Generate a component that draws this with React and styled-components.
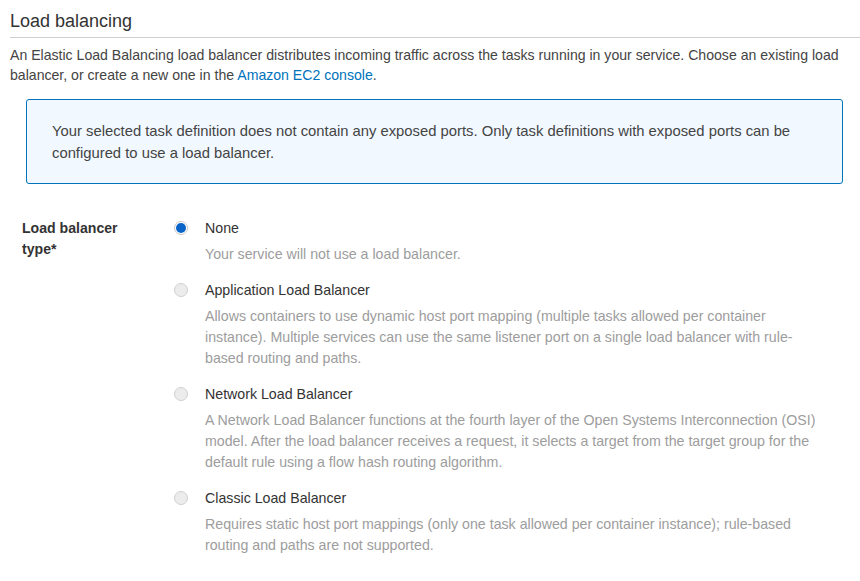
import React, { useState } from 'react'
import styled, { createGlobalStyle } from 'styled-components'

const GlobalStyle = createGlobalStyle`
  body {
    margin: 0;
    background: #ffffff;
    font-family: "Liberation Sans", Arial, sans-serif;
    color: #444;
  }
`

const Section = styled.section`
  padding: 10px 0 0 10px;
`

const Heading = styled.h2`
  margin: 0;
  font-size: 18px;
  font-weight: 400;
  line-height: 22px;
  color: #333;
  padding-bottom: 5px;
  border-bottom: 1px solid #cfcfcf;
`

const Intro = styled.p`
  margin: 7px 8px 0 0;
  font-size: 14.1px;
  line-height: 20px;
  color: #444;
`

const Link = styled.a`
  color: #0073bb;
  text-decoration: none;
`

const Alert = styled.div`
  margin: 14px 17px 0 16px;
  padding: 20px 25px 19px 25px;
  background: #f1f8ff;
  border: 1px solid #0073bb;
  border-radius: 3px;
  font-size: 14.8px;
  line-height: 22px;
  color: #444;
`

const Field = styled.div`
  display: grid;
  grid-template-columns: 152px 1fr;
  margin: 34px 40px 0 12px;
`

const Label = styled.div`
  font-size: 14.1px;
  font-weight: 700;
  line-height: 21px;
  color: #333;
`

const Options = styled.div`
  display: flex;
  flex-direction: column;
  gap: 15px;
`

const Option = styled.label`
  display: grid;
  grid-template-columns: 31px 1fr;
  cursor: pointer;
`

const Radio = styled.span`
  width: 14px;
  height: 14px;
  margin-top: 3px;
  box-sizing: border-box;
  border-radius: 50%;
  border: 1px solid ${(p) => (p.checked ? '#c8c8c8' : '#d0d0d0')};
  background: ${(p) => (p.checked ? '#fff' : '#ececec')};
  display: flex;
  align-items: center;
  justify-content: center;

  &::after {
    content: '';
    display: ${(p) => (p.checked ? 'block' : 'none')};
    width: 10px;
    height: 10px;
    border-radius: 50%;
    background: #0a64c8;
  }
`

const OptionTitle = styled.div`
  font-size: 14.2px;
  line-height: 20px;
  color: #333;
`

const OptionDesc = styled.div`
  margin-top: 6px;
  font-size: 14.2px;
  line-height: 21px;
  color: #9d9d9d;
`

const options = [
  {
    id: 'none',
    title: 'None',
    desc: 'Your service will not use a load balancer.',
  },
  {
    id: 'alb',
    title: 'Application Load Balancer',
    desc: 'Allows containers to use dynamic host port mapping (multiple tasks allowed per container instance). Multiple services can use the same listener port on a single load balancer with rule-based routing and paths.',
  },
  {
    id: 'nlb',
    title: 'Network Load Balancer',
    desc: 'A Network Load Balancer functions at the fourth layer of the Open Systems Interconnection (OSI) model. After the load balancer receives a request, it selects a target from the target group for the default rule using a flow hash routing algorithm.',
  },
  {
    id: 'clb',
    title: 'Classic Load Balancer',
    desc: 'Requires static host port mappings (only one task allowed per container instance); rule-based routing and paths are not supported.',
  },
]

export default function App() {
  const [selected, setSelected] = useState('none')

  return (
    <>
      <GlobalStyle />
      <Section>
        <Heading>Load balancing</Heading>
        <Intro>
          An Elastic Load Balancing load balancer distributes incoming traffic across the tasks running in your
          service. Choose an existing load balancer, or create a new one in the <Link href="#">Amazon EC2 console</Link>.
        </Intro>
        <Alert>
          Your selected task definition does not contain any exposed ports. Only task definitions with exposed ports
          can be configured to use a load balancer.
        </Alert>
        <Field>
          <Label>
            Load balancer
            <br />
            type*
          </Label>
          <Options>
            {options.map((o) => (
              <Option key={o.id} onClick={() => setSelected(o.id)}>
                <Radio checked={selected === o.id} />
                <div>
                  <OptionTitle>{o.title}</OptionTitle>
                  <OptionDesc>{o.desc}</OptionDesc>
                </div>
              </Option>
            ))}
          </Options>
        </Field>
      </Section>
    </>
  )
}
